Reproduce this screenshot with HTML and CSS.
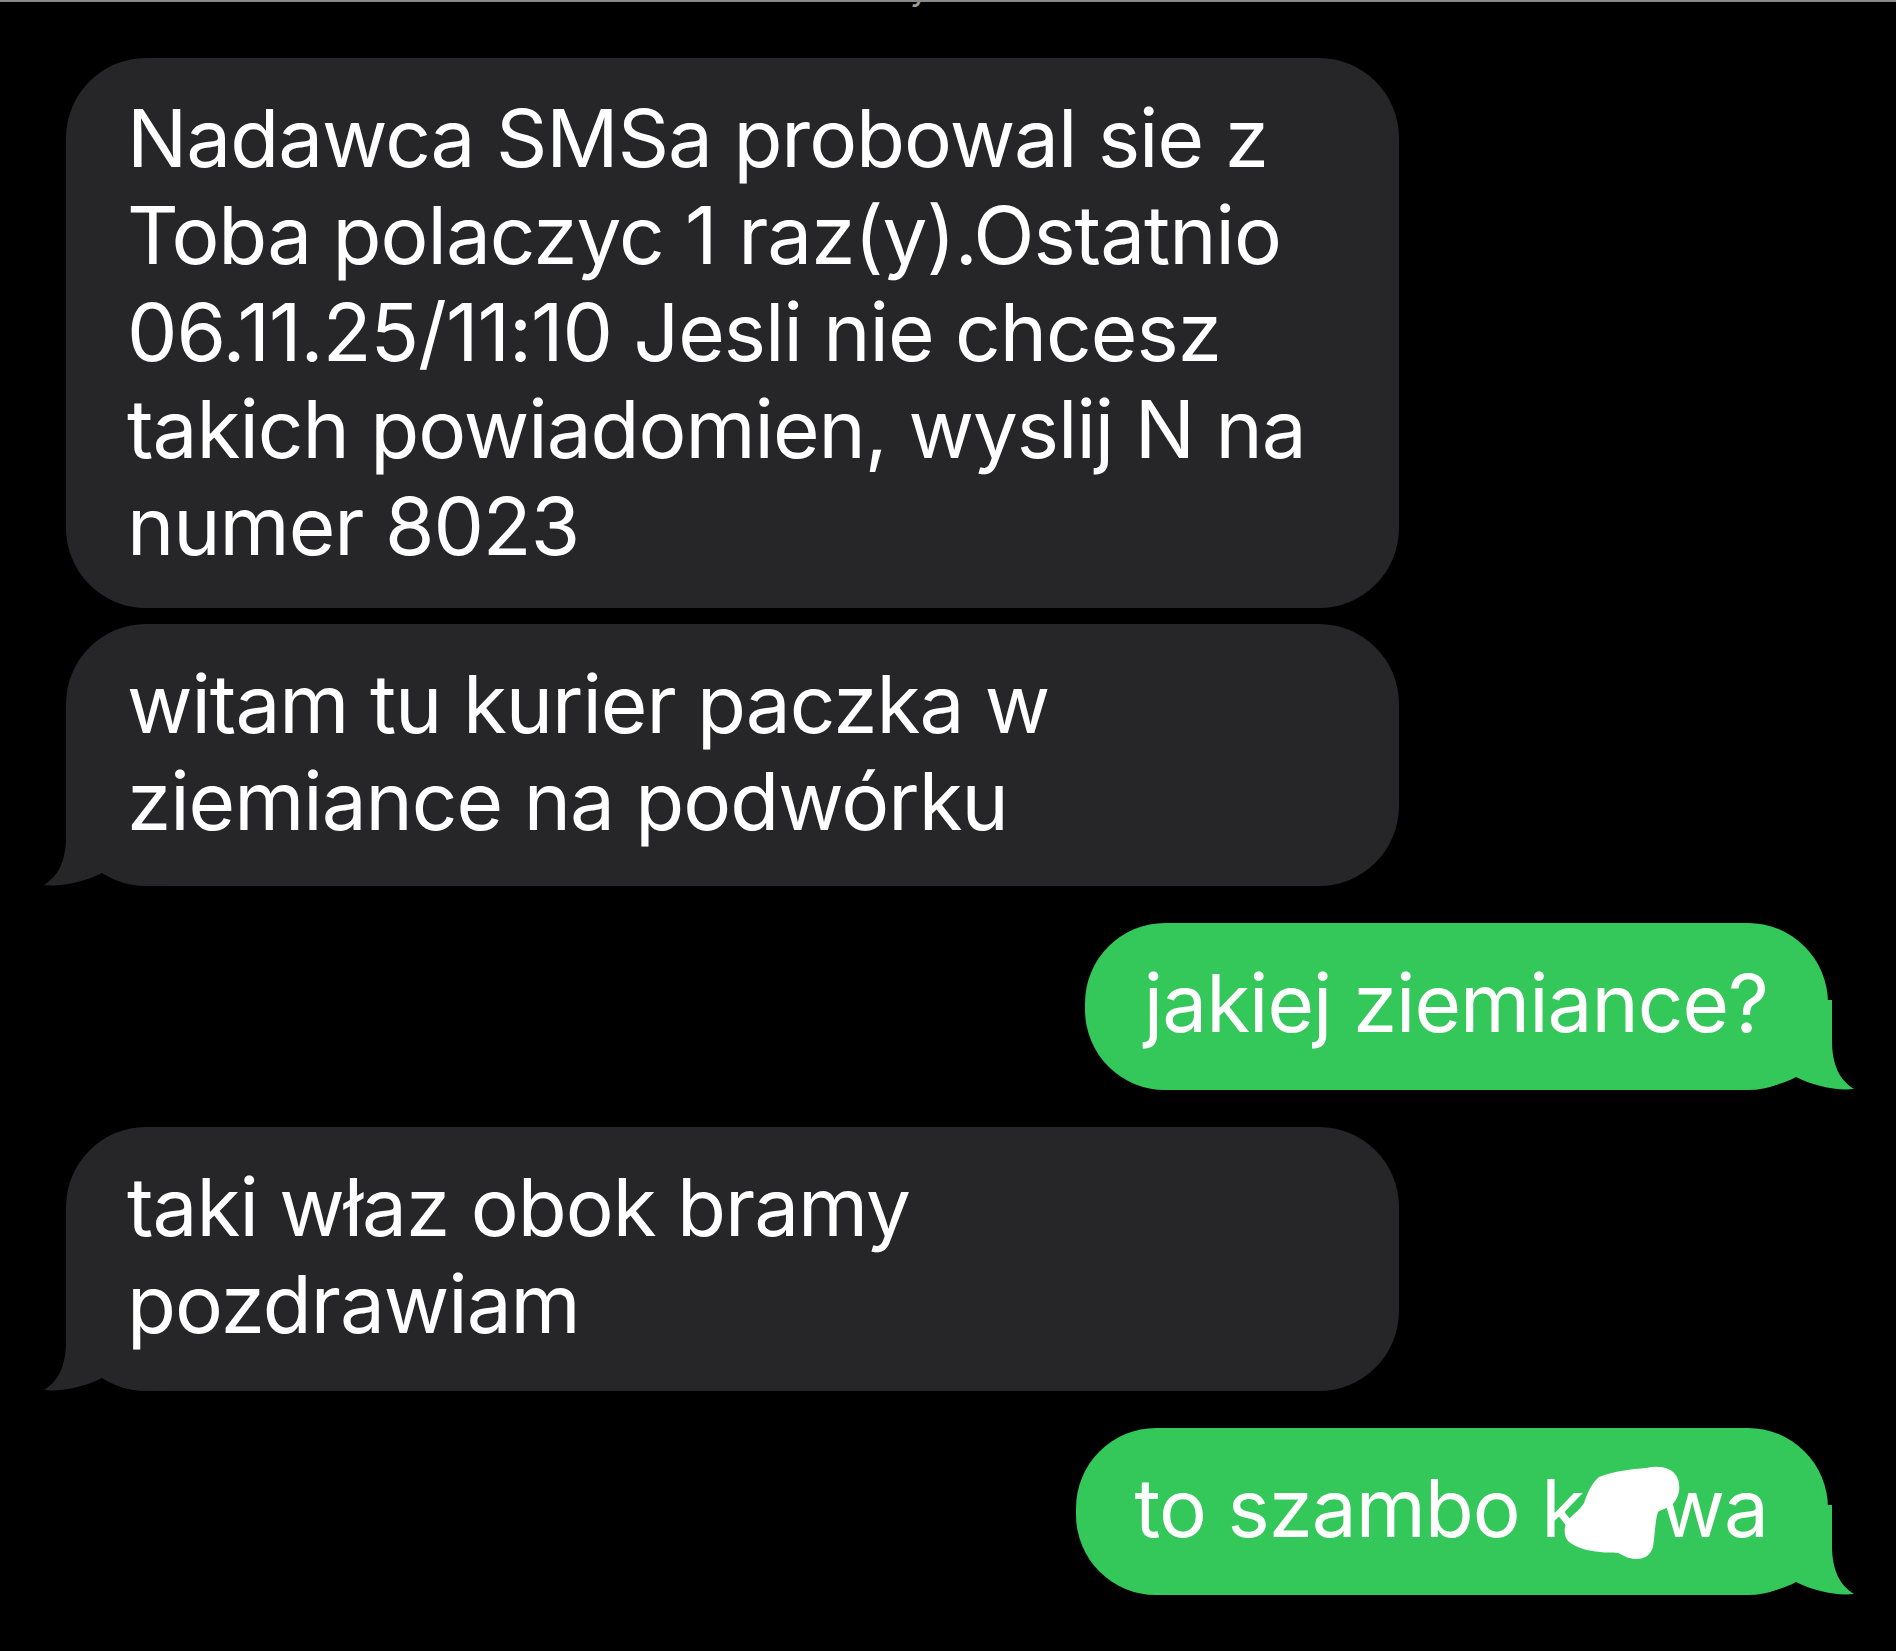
FILE: index.html
```html
<!DOCTYPE html>
<html lang="pl">
<head>
  <meta charset="UTF-8" />
  <meta name="viewport" content="width=device-width, initial-scale=1.0" />
  <title>Wiadomości</title>
  <link rel="stylesheet" href="styles.css">
</head>
<body>
  <div class="header">
    <span class="header-text">y</span>
  </div>

  <div class="thread">
    <div class="msg in first">
      Nadawca SMSa probowal sie z<br>
      Toba polaczyc 1 raz(y).Ostatnio<br>
      06.11.25/11:10 Jesli nie chcesz<br>
      takich powiadomien, wyslij N na<br>
      numer 8023
    </div>

    <div class="msg in">
      witam tu kurier paczka w<br>
      ziemiance na podwórku
      <svg class="tail tail-in" viewBox="0 0 130 90" width="130" height="90"><path d="M22 0 L22 40 C22 66 14 80 0 89 C18 91 40 86 58 77 C74 86 95 90 130 90 L130 0 Z"/></svg>
    </div>

    <div class="msg out">
      jakiej ziemiance?
      <svg class="tail tail-out" viewBox="0 0 130 90" width="130" height="90"><path d="M22 0 L22 40 C22 66 14 80 0 89 C18 91 40 86 58 77 C74 86 95 90 130 90 L130 0 Z"/></svg>
    </div>

    <div class="msg in last">
      taki właz obok bramy<br>
      pozdrawiam
      <svg class="tail tail-in" viewBox="0 0 130 90" width="130" height="90"><path d="M22 0 L22 40 C22 66 14 80 0 89 C18 91 40 86 58 77 C74 86 95 90 130 90 L130 0 Z"/></svg>
    </div>

    <div class="msg out">
      to szambo k<span class="censor">ur<svg class="blob" viewBox="0 0 120 96" width="120" height="96"><path d="M37 12 C52 6 70 4 84 3 C96 0 110 2 115 12 C119 20 118 32 110 40 C104 44 98 45 96 47 C93 56 93 70 91 82 C88 91 82 94 74 94 C66 94 61 90 56 88 C50 87 44 88 38 87 C26 86 14 83 6 76 C1 70 2 60 6 55 C11 49 17 46 22 38 C25 30 28 20 37 12 Z"/></svg></span>wa
      <svg class="tail tail-out" viewBox="0 0 130 90" width="130" height="90"><path d="M22 0 L22 40 C22 66 14 80 0 89 C18 91 40 86 58 77 C74 86 95 90 130 90 L130 0 Z"/></svg>
    </div>
  </div>
</body>
</html>
```

FILE: styles.css
```css
* {
  box-sizing: border-box;
}

html, body {
  background: #000;
}

body {
  margin: 0;
  width: 1896px;
  height: 1651px;
  overflow: hidden;
  font-family: Inter, "Noto Sans", sans-serif;
  color: #fff;
}

.header {
  height: 58px;
  border-top: 2px solid #8a8a8a;
  padding-left: 910px;
  overflow: hidden;
}

.header-text {
  display: block;
  font-size: 34px;
  line-height: 34px;
  margin-top: -31px;
  color: #9a9a9a;
}

.thread {
  display: flex;
  flex-direction: column;
  padding: 0 68px 0 66px;
}

.msg {
  position: relative;
  z-index: 0;
  font-size: 80px;
  line-height: 97px;
  letter-spacing: -1px;
  white-space: nowrap;
  border-radius: 80px;
  padding: 31px 60px 37px 61px;
}

.in {
  align-self: flex-start;
  width: 1333px;
  background: #262628;
  margin-top: 37px;
}

.in.first {
  margin-top: 0;
  padding-bottom: 34px;
}

.in.last {
  padding-bottom: 39px;
}

.msg.in + .msg.in {
  margin-top: 16px;
}

.out {
  align-self: flex-end;
  background: #34c759;
  margin-top: 37px;
  padding: 31px 60px 39px 59px;
}

.tail {
  position: absolute;
  bottom: 0;
  z-index: -1;
}

.tail-in {
  left: -22px;
  fill: #262628;
}

.tail-out {
  right: -26px;
  fill: #34c759;
  transform: scaleX(-1);
}

.censor {
  position: relative;
}

.blob {
  position: absolute;
  left: -22px;
  top: 6px;
  fill: #fff;
}
```
